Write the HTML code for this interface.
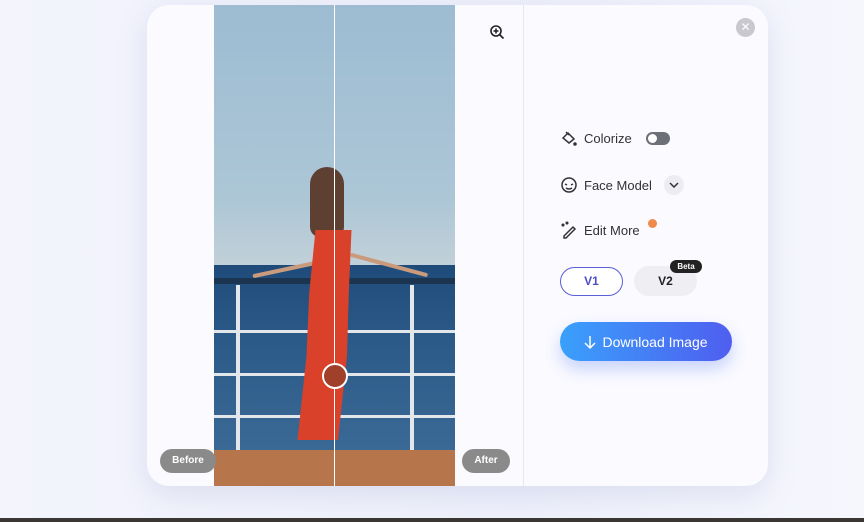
<!DOCTYPE html>
<html><head><style>
*{margin:0;padding:0;box-sizing:border-box}
body{width:864px;height:522px;overflow:hidden;background:#eef0fa;font-family:"Liberation Sans",sans-serif;position:relative}
.bg{position:absolute;inset:0;background:linear-gradient(90deg,#f3f4fc,#eef0fb 60%,#f6f7fd)}
.card{position:absolute;left:147px;top:5px;width:621px;height:481px;background:#fafaff;border-radius:22px;box-shadow:0 8px 30px rgba(120,130,190,.18);overflow:hidden}
.img{position:absolute;left:67px;top:0;width:241px;height:481px;background:linear-gradient(180deg,#9dbcd2 0%,#acc6d6 40%,#c1d0d8 54%);overflow:hidden}
.sea{position:absolute;left:0;top:260px;width:100%;height:190px;background:linear-gradient(180deg,#1f4b7a,#2c5a88 40%,#3c6a96)}
.deck{position:absolute;left:0;top:445px;width:100%;height:36px;background:#b6754a}
.rail{position:absolute;left:0;height:3px;width:100%;background:#e3e7ec}
.post{position:absolute;top:280px;width:4px;height:170px;background:#e3e7ec}
.topbar{position:absolute;left:0;top:273px;width:100%;height:6px;background:#1b3550}
.dress{position:absolute;left:70px;top:225px;width:90px;height:210px;background:#d9412a;clip-path:polygon(35% 0,75% 0,72% 30%,70% 60%,60% 100%,15% 100%,25% 60%,28% 30%)}
.arm{position:absolute;height:4px;background:#c99a7c;border-radius:2px}
.head{position:absolute;left:96px;top:162px;width:34px;height:70px;background:#5e4032;border-radius:17px 17px 10px 10px}
.line{position:absolute;left:120px;top:0;width:1px;height:481px;background:#fff}
.handle{position:absolute;left:108px;top:358px;width:26px;height:26px;border-radius:50%;border:2px solid #fff;background:#a0402a}
.pill{position:absolute;top:444px;height:24px;border-radius:12px;background:#8a8a8a;color:#fff;font-size:10px;font-weight:bold;text-align:center;line-height:24px}
.div{position:absolute;left:376px;top:0;width:1px;height:481px;background:#e6e8f0}
.row{position:absolute;left:413px;font-size:13px;color:#333;display:flex;align-items:center;gap:6px}
.toggle{width:24px;height:13px;border-radius:7px;background:#6e7078;position:relative;margin-left:8px}
.toggle:after{content:"";position:absolute;left:2px;top:2px;width:9px;height:9px;border-radius:50%;background:#fff}
.chev{width:20px;height:20px;border-radius:50%;background:#ececf2;margin-left:6px;display:flex;align-items:center;justify-content:center}
.v1{position:absolute;left:413px;top:262px;width:63px;height:29px;border:1.5px solid #5b5fd6;border-radius:15px;color:#4a4fc8;font-size:12px;font-weight:bold;text-align:center;line-height:26px;background:#fff}
.v2{position:absolute;left:487px;top:261px;width:63px;height:30px;border-radius:15px;background:#eeeef3;color:#222;font-size:12px;font-weight:bold;text-align:center;line-height:30px}
.beta{position:absolute;left:523px;top:255px;width:32px;height:13px;border-radius:7px;background:#222;color:#fff;font-size:8px;font-weight:bold;text-align:center;line-height:13px}
.dl{position:absolute;left:413px;top:317px;width:172px;height:39px;border-radius:20px;background:linear-gradient(90deg,#3aa0fb,#4f5ef0);color:#fff;font-size:14px;display:flex;align-items:center;justify-content:center;gap:6px;box-shadow:0 8px 16px rgba(80,120,240,.3)}
.close{position:absolute;left:589px;top:13px;width:19px;height:19px;border-radius:50%;background:#c8c8ce;color:#fff;font-size:12px;text-align:center;line-height:19px}
</style></head><body>
<div class="bg"></div>
<div class="card">
 <div class="img">
  <div class="sea"></div>
  <div class="topbar"></div>
  <div class="rail" style="top:325px"></div>
  <div class="rail" style="top:368px"></div>
  <div class="rail" style="top:410px"></div>
  <div class="post" style="left:22px"></div>
  <div class="post" style="left:196px"></div>
  <div class="deck"></div>
  <div class="arm" style="left:38px;top:262px;width:70px;transform:rotate(-12deg)"></div>
  <div class="arm" style="left:135px;top:258px;width:80px;transform:rotate(15deg)"></div>
  <div class="head"></div>
  <div class="dress"></div>
  <div class="line"></div>
  <div class="handle"></div>
 </div>
 <div class="pill" style="left:13px;width:56px">Before</div>
 <div class="pill" style="left:315px;width:48px">After</div>
 <svg style="position:absolute;left:342px;top:19px" width="16" height="16" viewBox="0 0 16 16" fill="none" stroke="#222" stroke-width="1.6"><circle cx="7" cy="7" r="5"/><path d="M11 11l3.5 3.5M7 4.5v5M4.5 7h5"/></svg>
 <div class="div"></div>
 <div class="close">✕</div>
 <div class="row" style="top:124px"><svg width="18" height="18" viewBox="0 0 18 18" fill="none" stroke="#333" stroke-width="1.5"><path d="M3 9l5-5 6 6-5 4z M6 3l3 3"/><circle cx="15" cy="15" r="1" fill="#333"/></svg>Colorize<div class="toggle"></div></div>
 <div class="row" style="top:170px"><svg width="18" height="18" viewBox="0 0 18 18" fill="none" stroke="#333" stroke-width="1.5"><circle cx="9" cy="9" r="7"/><path d="M5 8l2 1M13 8l-2 1M6 12q3 2 6 0"/></svg>Face Model<div class="chev"><svg width="10" height="6" viewBox="0 0 10 6" fill="none" stroke="#333" stroke-width="1.5"><path d="M1 1l4 4 4-4"/></svg></div></div>
 <div class="row" style="top:216px"><svg width="18" height="18" viewBox="0 0 18 18" fill="none" stroke="#333" stroke-width="1.5"><path d="M4 15l9-9 2 2-9 9H4z"/><circle cx="3" cy="4" r=".8" fill="#333"/><circle cx="7" cy="2" r=".8" fill="#333"/></svg>Edit More<span style="width:9px;height:9px;border-radius:50%;background:#f08a4b;margin:-14px 0 0 2px"></span></div>
 <div class="v1">V1</div>
 <div class="v2">V2</div>
 <div class="beta">Beta</div>
 <div class="dl"><svg width="12" height="14" viewBox="0 0 12 14" fill="none" stroke="#fff" stroke-width="1.5"><path d="M6 1v12M1 8l5 5 5-5"/></svg>Download Image</div>
</div>
<div style="position:absolute;left:0;top:518px;width:864px;height:4px;background:#3a3633"></div>
</body></html>
